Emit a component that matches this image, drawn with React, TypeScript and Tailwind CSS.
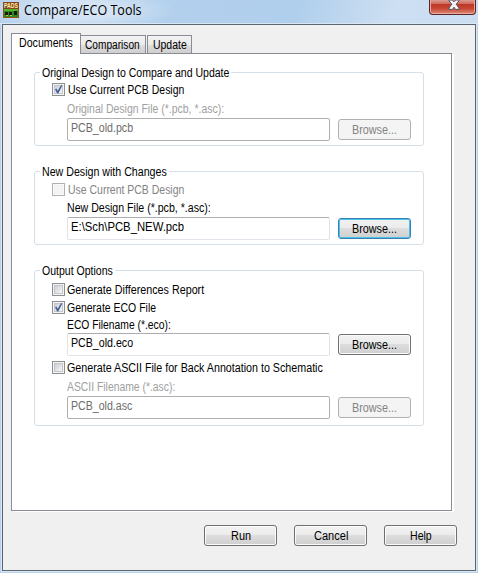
import { useLayoutEffect, useRef, useState, type ReactNode } from "react";
import clsx from "clsx";

// Condenses one line of text horizontally to the given width.
function Fit({ w, children, className }: { w: number; children: string; className?: string }) {
  const ref = useRef<HTMLSpanElement>(null);
  const [scale, setScale] = useState(1);
  useLayoutEffect(() => {
    if (ref.current) setScale(w / ref.current.offsetWidth);
  }, [w]);
  return (
    <span className="block shrink-0" style={{ width: w }}>
      <span ref={ref} className={clsx("inline-block origin-left whitespace-nowrap align-top", className)} style={{ transform: `scaleX(${scale})` }}>
        {children}
      </span>
    </span>
  );
}

type Tone = "normal" | "focus" | "disabled";

function Button({ label, w, tone = "normal" }: { label: string; w: number; tone?: Tone }) {
  return (
    <button
      className={clsx(
        "flex h-[21px] w-[73px] shrink-0 justify-center rounded-[3px] border pt-[3px]",
        tone === "disabled" && "border-[#adb2b5] bg-[#f4f4f4] text-[#838383]",
        tone === "normal" &&
          "border-[#707070] bg-[linear-gradient(#f2f2f2_0%,#ebebeb_48%,#dddddd_50%,#cfcfcf_100%)] shadow-[inset_0_0_0_1px_#fbfbfb]",
        tone === "focus" &&
          "border-[#3c7fb1] bg-[linear-gradient(#f2f2f2_0%,#ebebeb_48%,#dddddd_50%,#cfcfcf_100%)] shadow-[inset_0_0_0_1px_#48c4e8]",
      )}
    >
      <Fit w={w}>{label}</Fit>
    </button>
  );
}

function Check({ label, w, checked, disabled, className }: { label: string; w: number; checked?: boolean; disabled?: boolean; className: string }) {
  return (
    <div className={clsx("flex h-3.5 items-start pl-[17px]", disabled && "text-[#838383]", className)}>
      <span
        className={clsx(
          "h-[13px] w-[13px] shrink-0 border p-px",
          disabled ? "border-[#b1b1b1] bg-[#fafafa]" : "border-[#8e8f8f] bg-[#f4f4f4]",
        )}
      >
        <span
          className={clsx(
            "block h-[9px] w-[9px] border",
            disabled
              ? "border-[#f0f0f0] bg-[#f4f4f4]"
              : "border-[#c3c7cc] bg-[linear-gradient(135deg,#cbcfd5,#f6f6f6)]",
          )}
        >
          {checked && (
            <svg viewBox="0 0 9 9" className="-ml-px -mt-px block h-[9px] w-[9px] overflow-visible">
              <path d="M1 4.2 2.4 3.6 3.7 5.7 7 0.2 8.4 0.3 4.3 8.4 3.2 8.4Z" fill="#465d9c" />
            </svg>
          )}
        </span>
      </span>
      <Fit w={w}>{label}</Fit>
    </div>
  );
}

function Field({ label, labelW, value, valueW, tone = "normal", className, inputGap }: {
  label: string; labelW: number; value: string; valueW: number; tone?: Tone; className: string; inputGap: string;
}) {
  const disabled = tone === "disabled";
  return (
    <div className={clsx("pl-8", className)}>
      <div className={clsx("h-3.5", disabled && "text-[#a0a0a0]")}>
        <Fit w={labelW}>{label}</Fit>
      </div>
      <div className={clsx("flex gap-2", inputGap)}>
        <div
          className={clsx(
            "h-[23px] w-[263px] shrink-0 rounded-[2px] border pl-[3px] pt-[2px]",
            disabled ? "border-[#afafaf] text-[#6d6d6d]" : "border-[#e2e3ea] border-t-[#abadb3]",
          )}
        >
          <Fit w={valueW}>{value}</Fit>
        </div>
        <div className="pt-px">
          <Button label="Browse..." w={45} tone={tone} />
        </div>
      </div>
    </div>
  );
}

function Group({ title, w, className, children }: { title: string; w: number; className: string; children: ReactNode }) {
  return (
    <section className={clsx("w-[390px] rounded-[3px] border border-[#d5dfe5]", className)}>
      <h2 className="-mt-[7px] ml-[5px] h-3.5 w-fit bg-white px-0.5">
        <Fit w={w}>{title}</Fit>
      </h2>
      {children}
    </section>
  );
}

export default function App() {
  return (
    <div className="flex h-[573px] w-[478px] flex-col overflow-hidden bg-[#b9d1ea] font-['Liberation_Sans',Arial,sans-serif] text-[12px] leading-[14px] text-black">
      <header className="flex h-6 shrink-0 items-start border-b border-[#dfeaf5] bg-[radial-gradient(ellipse_95px_22px_at_80px_10px,#d5e4f4_35%,transparent_100%),linear-gradient(105deg,#b5d1ed_0%,#b0cfec_62%,#cddff2_82%,#cbddf0_100%)] pl-[3px]">
        <svg viewBox="0 0 16 16" className="mt-0.5 h-4 w-4 shrink-0 overflow-visible" shapeRendering="crispEdges">
          <rect width="16" height="16" fill="#96501c" />
          <path d="M0 0H16V7H0Z" fill="#87431a" />
          <rect x="1" y="7" width="14" height="8" fill="#2f8a1c" />
          <path d="M1 7H15V9H1Z" fill="#55b52a" />
          <rect x="2" y="10" width="3" height="3" fill="#151b10" />
          <rect x="6" y="10" width="3" height="3" fill="#151b10" />
          <rect x="11" y="9" width="3" height="4" fill="#151b10" />
          <path d="M3 13H5V14H3ZM7 13H9V14H7Z" fill="#cbbd42" />
          <text x="1" y="6" textLength="14" lengthAdjust="spacingAndGlyphs" fill="#fff0ad" fontSize="6.5" fontWeight="700" fontFamily="Liberation Sans">PADS</text>
        </svg>
        <h1 className="pl-[5px] font-['Open_Sans','Noto_Sans',sans-serif] text-[15px] leading-[19px]">
          <Fit w={118}>Compare/ECO Tools</Fit>
        </h1>
        <button aria-label="Close" className="ml-auto mr-[2px] flex h-[15px] w-[47px] justify-center rounded-b-[4px] border border-t-0 border-[#5a2524] bg-[linear-gradient(#dc9a90_0%,#d0685a_28%,#bc3a25_32%,#c74531_60%,#dc8c7c_100%)] shadow-[inset_0_-1px_0_#e9aaa0,inset_1px_0_0_#e5aaa2,inset_-1px_0_0_#e5aaa2]">
          <svg viewBox="0 0 12 10" className="ml-0.5 h-[10px] w-3">
            <path d="M1 0H4.2L6 1.8 7.8 0H11V.8L8.2 4.2 11 8V9.4H7.5L6 7.2 4.5 9.4H1V8L3.8 4.2 1 .8Z" fill="#f5f5f5" stroke="#515365" />
          </svg>
        </button>
      </header>

      <div className="ml-[2px] flex h-[547px] w-[474px] shrink-0 flex-col border border-[#5b6672] bg-[#f0f0f0] pl-2 shadow-[0_0_0_1px_#d9e7f5]">
        <nav className="flex h-[28px] items-end">
          <div className="z-10 h-5 w-[70px] border border-b-0 border-[#898c95] bg-white pl-[7px] pt-[2px]">
            <Fit w={54}>Documents</Fit>
          </div>
          <div className="h-[18px] w-[65px] border-r border-t border-[#898c95] bg-[linear-gradient(#f2f2f2_0%,#ebebeb_50%,#dddddd_52%,#cfcfcf_100%)] pl-[4px] pt-[2px]">
            <Fit w={55}>Comparison</Fit>
          </div>
          <div className="ml-px h-[18px] w-[45px] border border-b-0 border-[#898c95] bg-[linear-gradient(#f2f2f2_0%,#ebebeb_50%,#dddddd_52%,#cfcfcf_100%)] pl-[5px] pt-[2px]">
            <Fit w={34}>Update</Fit>
          </div>
        </nav>

        <main className="relative h-[458px] w-[441px] shrink-0 border border-[#898c95] bg-white pl-[22px] pt-[18px] shadow-[2px_1px_0_#fff]">
          <span className="absolute -top-px left-0 h-px w-[68px] bg-white" />
          <Group title="Original Design to Compare and Update" w={187} className="h-[74px]">
            <Check label="Use Current PCB Design" w={116} checked className="mt-[3px] gap-[3px]" />
            <Field label="Original Design File (*.pcb, *.asc):" labelW={157} value="PCB_old.pcb" valueW={62} tone="disabled" className="mt-[5px]" inputGap="mt-0.5" />
          </Group>
          <Group title="New Design with Changes" w={125} className="mt-[25px] h-[74px]">
            <Check label="Use Current PCB Design" w={116} disabled className="mt-1 gap-[3px]" />
            <Field label="New Design File (*.pcb, *.asc):" labelW={144} value="E:\Sch\PCB_NEW.pcb" valueW={113} tone="focus" className="mt-1" inputGap="mt-0.5" />
          </Group>
          <Group title="Output Options" w={71} className="mt-[25px] h-[156px]">
            <Check label="Generate Differences Report" w={137} className="mt-[5px] gap-0.5" />
            <Check label="Generate ECO File" w={89} checked className="mt-1 gap-0.5" />
            <Field label="ECO Filename (*.eco):" labelW={104} value="PCB_old.eco" valueW={62} className="mt-[3px]" inputGap="mt-px" />
            <Check label="Generate ASCII File for Back Annotation to Schematic" w={256} className="mt-[5px] gap-0.5" />
            <Field label="ASCII Filename (*.asc):" labelW={108} value="PCB_old.asc" valueW={61} tone="disabled" className="mt-[5px]" inputGap="mt-0.5" />
          </Group>
        </main>

        <footer className="mt-[14px] flex gap-[17px] pl-[193px]">
          <Button label="Run" w={20} />
          <Button label="Cancel" w={34} />
          <Button label="Help" w={22} />
        </footer>
      </div>
    </div>
  );
}
